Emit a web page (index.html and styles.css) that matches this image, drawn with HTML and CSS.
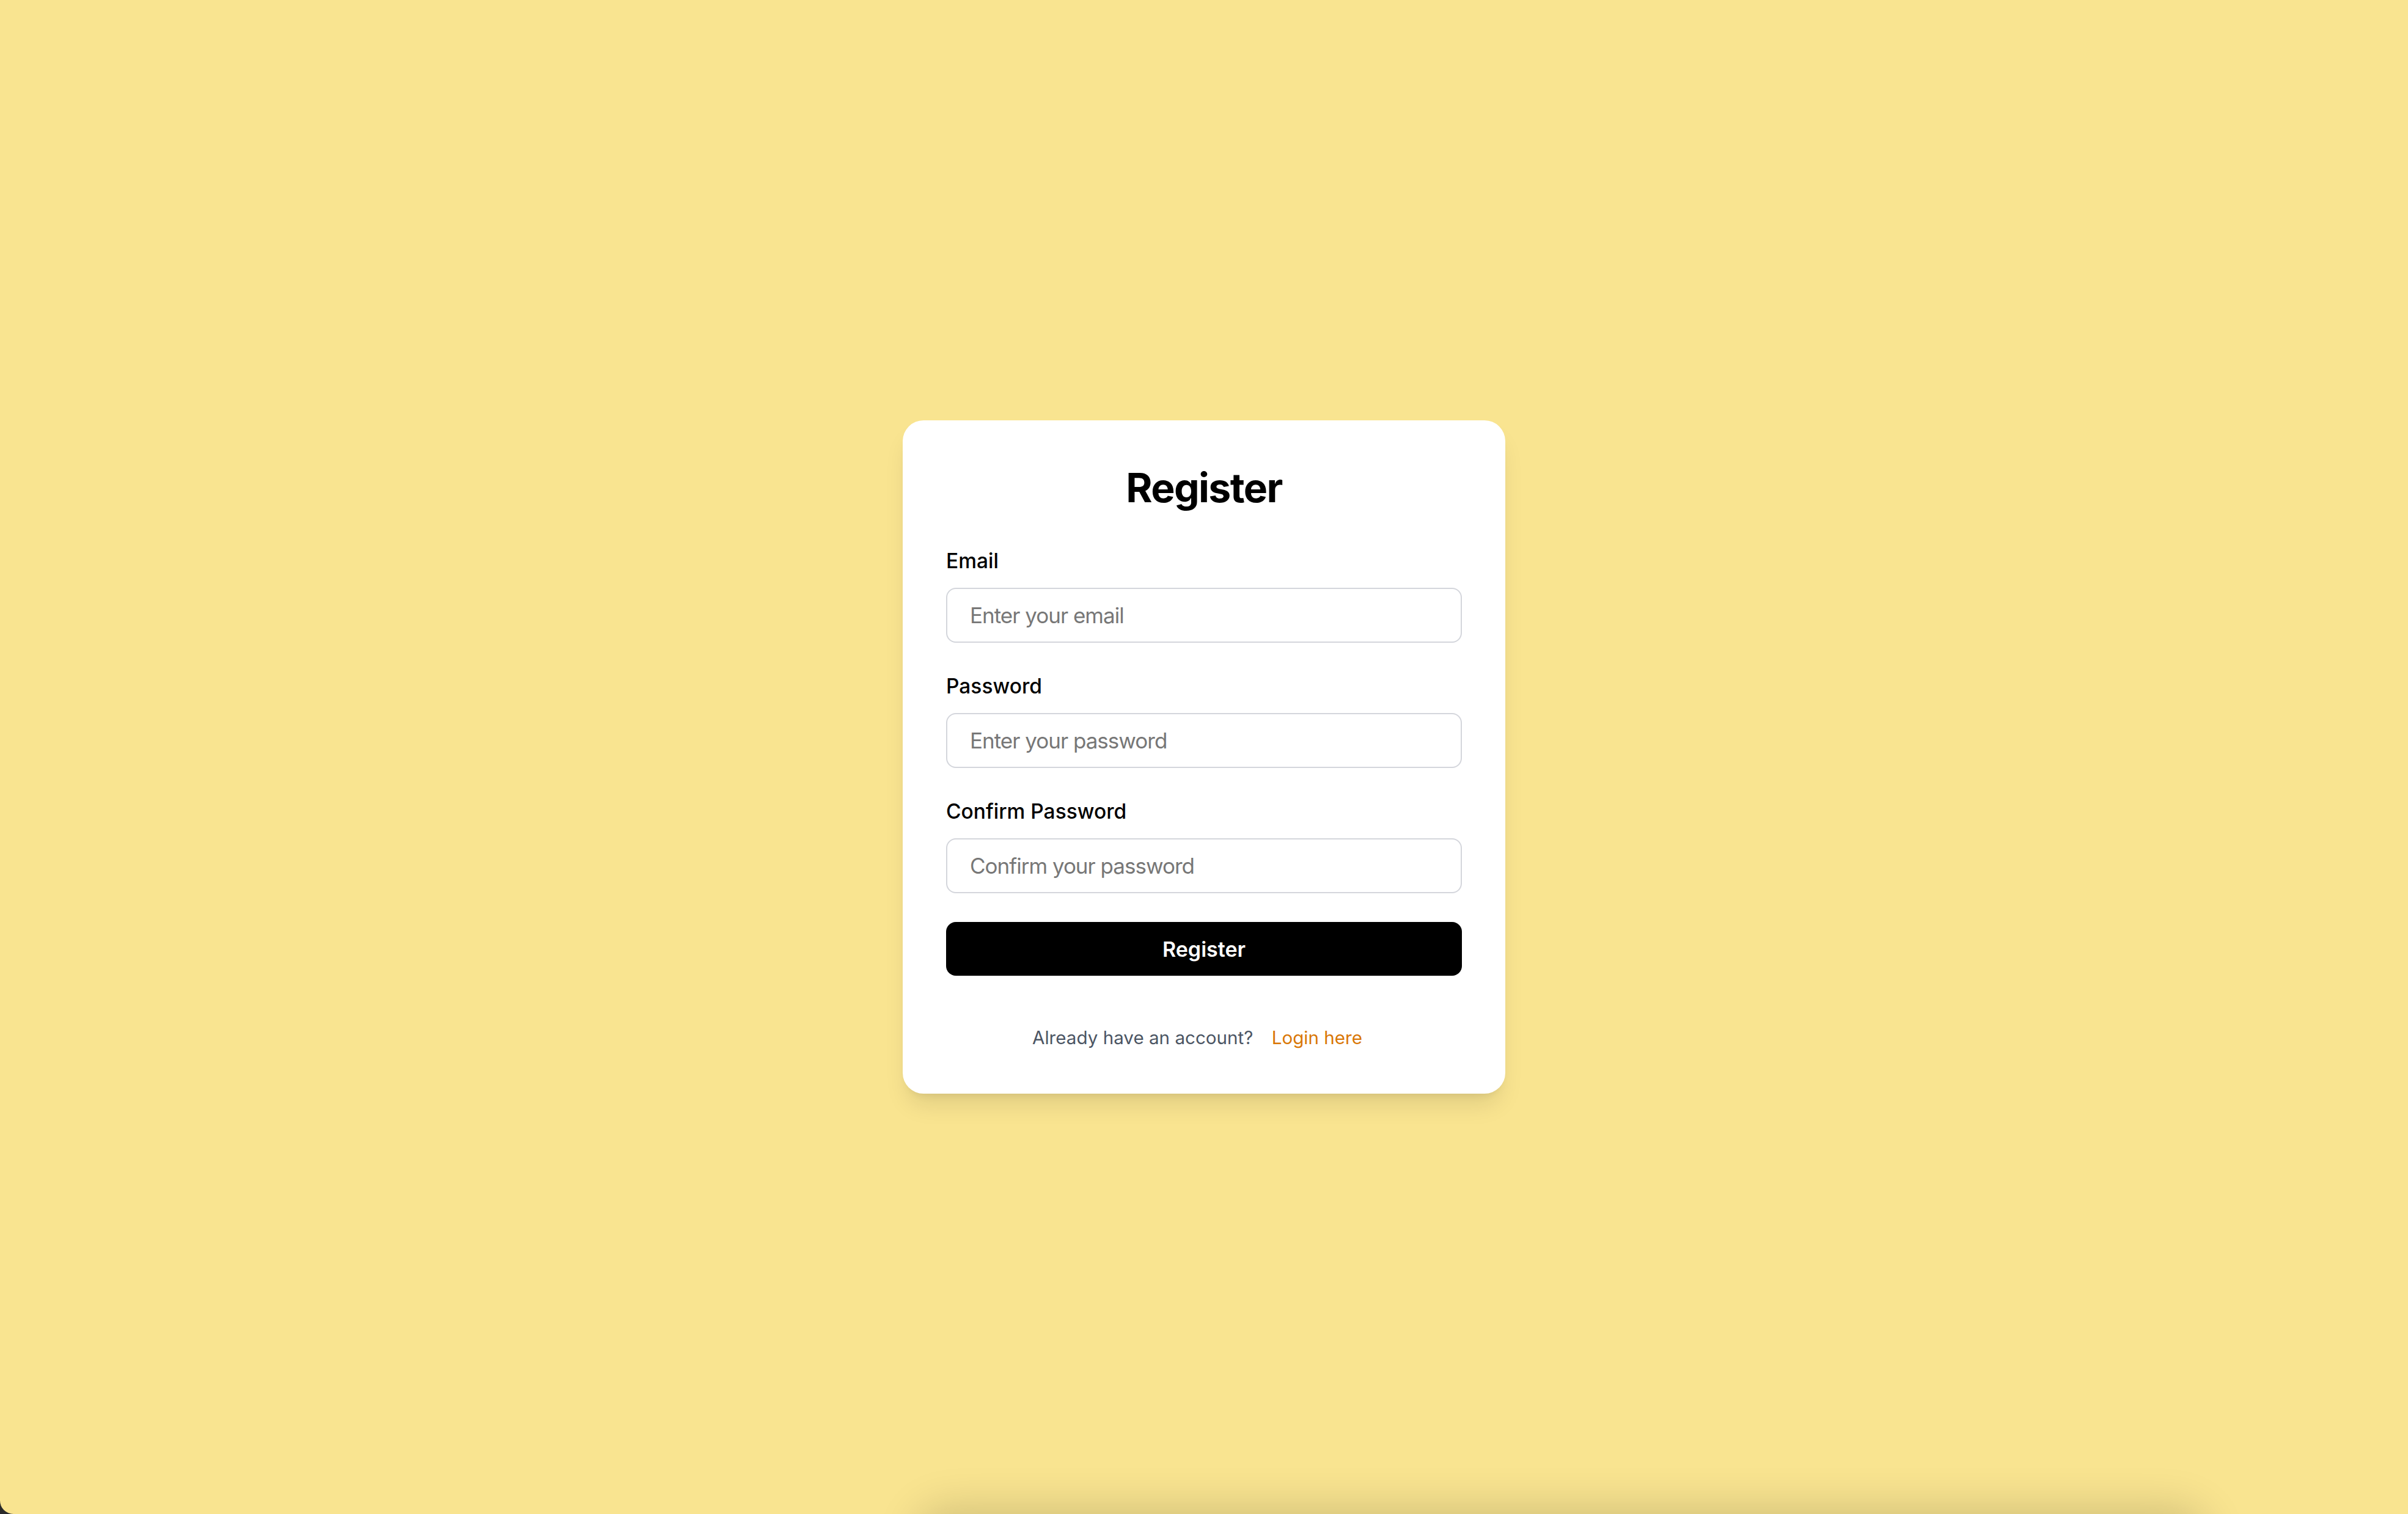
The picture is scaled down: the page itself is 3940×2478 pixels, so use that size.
FILE: index.html
```html
<!DOCTYPE html>
<html lang="en">
<head>
<meta charset="utf-8">
<title>Register</title>
<link rel="stylesheet" href="styles.css">
</head>
<body>
<div class="screen">
  <main class="card">
    <h1 class="title">Register</h1>
    <form class="form">
      <div class="field">
        <label class="label" for="email">Email</label>
        <input class="input" id="email" type="email" placeholder="Enter your email">
      </div>
      <div class="field">
        <label class="label" for="password">Password</label>
        <input class="input" id="password" type="password" placeholder="Enter your password">
      </div>
      <div class="field">
        <label class="label" for="confirm">Confirm Password</label>
        <input class="input" id="confirm" type="password" placeholder="Confirm your password">
      </div>
      <button class="button" type="button">Register</button>
    </form>
    <p class="footer">Already have an account? <a class="link" href="#">Login here</a></p>
  </main>
  <div class="peek"></div>
</div>
</body>
</html>
```
FILE: styles.css
```css
html, body {
  margin: 0;
  padding: 0;
  height: 100%;
}
body {
  background: #2a2a2a;
  font-family: Inter, "Noto Sans", "Liberation Sans", sans-serif;
  overflow: hidden;
}
.screen {
  position: relative;
  min-height: 100vh;
  background: #f9e490;
  border-bottom-left-radius: 22px;
  display: flex;
  align-items: center;
  justify-content: center;
  overflow: hidden;
}
.card {
  width: 986px;
  box-sizing: border-box;
  padding: 66px 71px 69px;
  background: #ffffff;
  border-radius: 34px;
  box-shadow: 0 25px 38px -8px rgba(0, 0, 0, 0.10), 0 10px 15px -10px rgba(0, 0, 0, 0.10);
}
.title {
  margin: 0 0 51px;
  font-size: 66px;
  line-height: 89px;
  font-weight: 700;
  text-align: center;
  color: #000;
  letter-spacing: -1.6px;
}
.form {
  display: flex;
  flex-direction: column;
}
.field {
  display: flex;
  flex-direction: column;
  margin-bottom: 47px;
}
.label {
  font-size: 33.5px;
  line-height: 49px;
  font-weight: 500;
  color: #000;
  margin-bottom: 19px;
}
.input {
  height: 90px;
  box-sizing: border-box;
  border: 2px solid #d4d6dc;
  border-radius: 16px;
  padding: 0 37px;
  font-family: inherit;
  font-size: 35px;
  letter-spacing: -1px;
  color: #111;
  background: #fff;
  outline: none;
}
.input::placeholder {
  color: #777777;
}
.button {
  height: 88px;
  border: none;
  border-radius: 16px;
  background: #000;
  color: #fff;
  font-family: inherit;
  font-size: 34px;
  font-weight: 600;
  cursor: pointer;
}
.footer {
  margin: 79px 0 0;
  text-align: center;
  font-size: 29.6px;
  line-height: 45px;
  color: #4b5563;
}
.link {
  padding: 0 22px;
  color: #d97706;
  text-decoration: none;
}
.peek {
  position: absolute;
  left: 1510px;
  width: 2090px;
  top: 100%;
  height: 200px;
  border-radius: 40px;
  box-shadow: 0 0 70px 10px rgba(0, 0, 0, 0.16);
}
```
